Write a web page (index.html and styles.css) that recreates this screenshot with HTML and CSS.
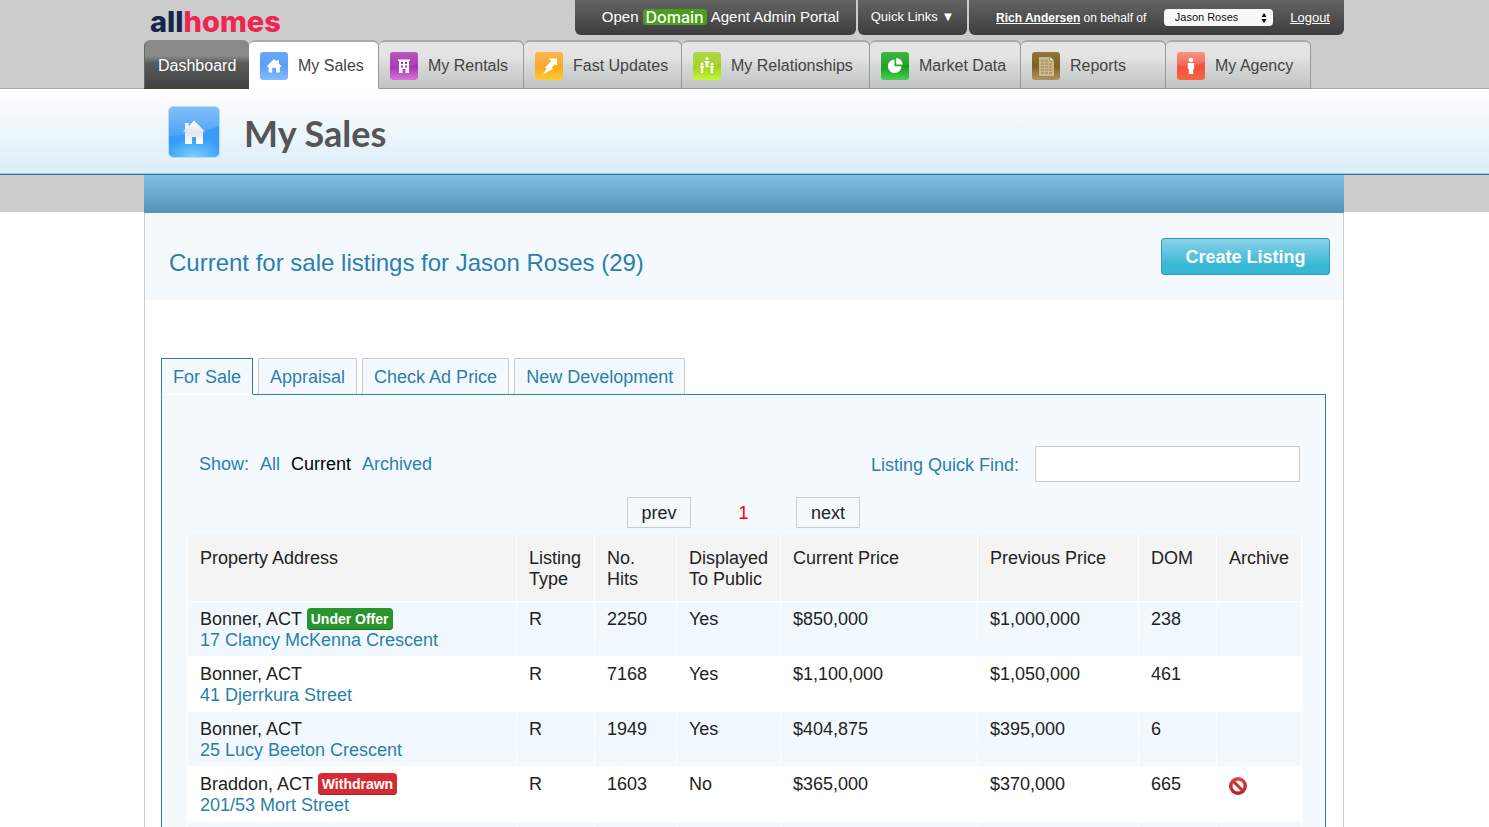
FILE: index.html
```html
<!DOCTYPE html>
<html lang="en">
<head>
<meta charset="utf-8">
<title>My Sales - allhomes</title>
<link rel="stylesheet" href="styles.css">
</head>
<body>
<svg class="defs" width="0" height="0" aria-hidden="true">
  <defs>
    <linearGradient id="blue" x1="0" y1="0" x2="0" y2="1"><stop offset="0" stop-color="#69a6f8"/><stop offset=".5" stop-color="#5a9ffb"/><stop offset="1" stop-color="#86bcff"/></linearGradient>
    <linearGradient id="purple" x1="0" y1="0" x2="0" y2="1"><stop offset="0" stop-color="#b04cb8"/><stop offset=".5" stop-color="#a32fae"/><stop offset="1" stop-color="#d676da"/></linearGradient>
    <linearGradient id="orange" x1="0" y1="0" x2="0" y2="1"><stop offset="0" stop-color="#fbb13a"/><stop offset=".5" stop-color="#f8a51c"/><stop offset="1" stop-color="#ffcb35"/></linearGradient>
    <linearGradient id="lime" x1="0" y1="0" x2="0" y2="1"><stop offset="0" stop-color="#aad433"/><stop offset=".5" stop-color="#9fd01c"/><stop offset="1" stop-color="#c6f73e"/></linearGradient>
    <linearGradient id="green" x1="0" y1="0" x2="0" y2="1"><stop offset="0" stop-color="#2bb02e"/><stop offset=".5" stop-color="#149c1b"/><stop offset="1" stop-color="#4bcf52"/></linearGradient>
    <linearGradient id="brown" x1="0" y1="0" x2="0" y2="1"><stop offset="0" stop-color="#94763a"/><stop offset=".5" stop-color="#80601f"/><stop offset="1" stop-color="#b3935a"/></linearGradient>
    <linearGradient id="red" x1="0" y1="0" x2="0" y2="1"><stop offset="0" stop-color="#fb8578"/><stop offset=".5" stop-color="#f0503a"/><stop offset="1" stop-color="#f4693f"/></linearGradient>
    <linearGradient id="sky" x1="0" y1="0" x2="0" y2="1"><stop offset="0" stop-color="#83bff9"/><stop offset=".55" stop-color="#4ea5f8"/><stop offset="1" stop-color="#5fbcff"/></linearGradient>
    <radialGradient id="glow" cx=".5" cy="1" r=".6"><stop offset="0" stop-color="#7dd0ff"/><stop offset="1" stop-color="#389df6"/></radialGradient>
    <linearGradient id="roof" x1="0" y1="0" x2="0" y2="1"><stop offset="0" stop-color="#fff"/><stop offset=".5" stop-color="#e2e6ea"/><stop offset="1" stop-color="#fff"/></linearGradient>
    <linearGradient id="stop" x1="0" y1="0" x2="0" y2="1"><stop offset="0" stop-color="#dc4a4a"/><stop offset="1" stop-color="#b01f24"/></linearGradient>
  </defs>
</svg>

<header class="top">
  <div class="wrap">
    <div class="top-row">
      <a class="logo" href="#"><span>all</span>homes</a>
      <div class="bars">
        <a class="bar bar-portal" href="#">Open <span class="domain">Domain</span> Agent Admin Portal</a>
        <button class="bar bar-quick" type="button">Quick Links ▼</button>
        <div class="bar bar-user">
          <span><a class="user" href="#">Rich Andersen</a> <label for="agent">on behalf of</label></span>
          <span class="pick">
            <select id="agent"><option>Jason Roses</option></select>
            <svg width="6" height="10" viewBox="0 0 6 10"><path d="M3 0 5.5 4H.5zM3 10 .5 6h5z"/></svg>
          </span>
          <a class="logout" href="#">Logout</a>
        </div>
      </div>
    </div>
    <nav class="nav">
      <a class="dash" href="#">Dashboard</a>
      <a class="on" href="#"><svg class="ico" viewBox="0 0 28 28"><rect width="28" height="28" rx="3" fill="url(#blue)"/><path d="M14 7l2.600 2.400V8.300h2.400v3.400l3 3h-2.200V20.500h-3.800v-4.700h-3.800v4.700H8.600v-5.800H6.300z" fill="#fff"/></svg>My Sales</a>
      <a href="#"><svg class="ico" viewBox="0 0 28 28"><rect width="28" height="28" rx="3" fill="url(#purple)"/><path d="M0 14Q14 18 28 12V0H0z" fill="#fff" opacity=".08"/><path d="M8 7.500h12V9h-1v12h-3.500v-4h-3v4H9V9H8z" fill="#fff"/><path d="M11 10h2v2h-2zm4 0h2v2h-2zm-4 3.500h2v2h-2zm4 0h2v2h-2z" fill="#a32fae"/></svg>My Rentals</a>
      <a href="#"><svg class="ico" viewBox="0 0 28 28"><rect width="28" height="28" rx="3" fill="url(#orange)"/><path d="M0 15Q14 17 28 12V0H0z" fill="#fff" opacity=".08"/><path d="M13.500 6.500H22V14l-2-2-3.500 4.200h2.300L8 22.500l3.800-6.500H9.700l6.600-7.200z" fill="#fff"/></svg>Fast Updates</a>
      <a href="#"><svg class="ico" viewBox="0 0 28 28"><rect width="28" height="28" rx="3" fill="url(#lime)"/><path d="M0 15Q14 17 28 12V0H0z" fill="#fff" opacity=".08"/><g fill="#fff"><circle cx="14" cy="6.500" r="1.600"/><circle cx="9" cy="12" r="1.500"/><circle cx="19" cy="12" r="1.500"/><path d="M11 9h6l-1.600 2v4.500h-2.800V11zM6.500 14h5l-1.200 2v5H8v-5zM16.500 14h5L20 16v5h-2.300v-5z"/></g></svg>My Relationships</a>
      <a href="#"><svg class="ico" viewBox="0 0 28 28"><rect width="28" height="28" rx="3" fill="url(#green)"/><path d="M0 15Q14 17 28 12V0H0z" fill="#fff" opacity=".08"/><path d="M13.500 7.500v6.800h7A6.800 6.800 0 1 1 13.500 7.500z" fill="#fff"/><path d="M15.200 6a6.500 6.500 0 0 1 6.500 6.500h-6.500z" fill="#fff"/></svg>Market Data</a>
      <a href="#"><svg class="ico" viewBox="0 0 28 28"><rect width="28" height="28" rx="3" fill="url(#brown)"/><path d="M7 5h11l4 4v15H7z" fill="#d8c9a8" opacity=".8"/><path d="M18 5v4h4" fill="#fff" stroke="#a58a55"/><path d="M9 9h7M9 12h11M9 15h11M9 18h11M9 21h11" stroke="#9c8047" stroke-dasharray="3 1"/></svg>Reports</a>
      <a href="#"><svg class="ico" viewBox="0 0 28 28"><rect width="28" height="28" rx="3" fill="url(#red)"/><path d="M0 14Q14 16 28 10V3a3 3 0 0 0-3-3H3a3 3 0 0 0-3 3z" fill="#fff" opacity=".12"/><circle cx="14" cy="8" r="2.300" fill="#fff"/><path d="M10.800 11h6.400v6h-1v5h-4.400v-5h-1z" fill="#fff"/></svg>My Agency</a>
    </nav>
  </div>
</header>

<div class="title-band">
  <div class="wrap title">
    <svg class="title-ico" viewBox="0 0 52 52"><rect x=".5" y=".5" width="51" height="51" rx="5" fill="url(#sky)" stroke="#b5dcfb"/><path d="M1 30Q28 29 51 20v26a5 5 0 0 1-5 5H6a5 5 0 0 1-5-5z" fill="url(#glow)"/><path d="M26 14.500 37 25.500h-2V38h-7v-7h-4v7h-7V25.500h-2l2-2V17h3.500v3.500z" fill="url(#roof)"/></svg>
    <h1>My Sales</h1>
  </div>
</div>

<div class="strip"><div class="wrap"><div class="strip-fill"></div></div></div>

<main class="wrap">
  <div class="page">
    <div class="heading">
      <h2>Current for sale listings for Jason Roses (29)</h2>
      <button class="create" type="button">Create Listing</button>
    </div>
    <div class="tabs">
      <a class="on" href="#">For Sale</a>
      <a href="#">Appraisal</a>
      <a href="#">Check Ad Price</a>
      <a href="#">New Development</a>
    </div>
    <section class="panel">
      <div class="filters">
        <div class="show"><span>Show:</span><a href="#">All</a><a class="on" href="#">Current</a><a href="#">Archived</a></div>
        <div class="find"><label for="find">Listing Quick Find:</label><input id="find" type="text"></div>
      </div>
      <div class="pager"><button type="button">prev</button><span>1</span><button type="button">next</button></div>
      <table>
        <colgroup><col class="c-addr"><col class="c-type"><col class="c-hits"><col class="c-disp"><col class="c-cur"><col class="c-prev"><col class="c-dom"><col class="c-arch"></colgroup>
        <thead><tr><th>Property Address</th><th>Listing Type</th><th>No.<br>Hits</th><th>Displayed To Public</th><th>Current Price</th><th>Previous Price</th><th>DOM</th><th>Archive</th></tr></thead>
        <tbody>
          <tr><td>Bonner, ACT <span class="tag offer">Under Offer</span><br><a href="#">17 Clancy McKenna Crescent</a></td><td>R</td><td>2250</td><td>Yes</td><td>$850,000</td><td>$1,000,000</td><td>238</td><td></td></tr>
          <tr><td>Bonner, ACT<br><a href="#">41 Djerrkura Street</a></td><td>R</td><td>7168</td><td>Yes</td><td>$1,100,000</td><td>$1,050,000</td><td>461</td><td></td></tr>
          <tr><td>Bonner, ACT<br><a href="#">25 Lucy Beeton Crescent</a></td><td>R</td><td>1949</td><td>Yes</td><td>$404,875</td><td>$395,000</td><td>6</td><td></td></tr>
          <tr><td>Braddon, ACT <span class="tag gone">Withdrawn</span><br><a href="#">201/53 Mort Street</a></td><td>R</td><td>1603</td><td>No</td><td>$365,000</td><td>$370,000</td><td>665</td><td><button class="archive" type="button" aria-label="Archive"><svg width="18" height="18" viewBox="0 0 18 18"><circle cx="9" cy="9" r="9" fill="url(#stop)"/><circle cx="9" cy="9" r="5.500" fill="#f4f2f2"/><path d="M4.800 4.800l8.400 8.400" stroke="#c23034" stroke-width="3"/></svg></button></td></tr>
          <tr><td></td><td></td><td></td><td></td><td></td><td></td><td></td><td></td></tr>
        </tbody>
      </table>
    </section>
  </div>
</main>
</body>
</html>
```
FILE: styles.css
```css
* { box-sizing: border-box; }
body { margin: 0; height: 100vh; overflow: hidden; background: #fff; color: #222; font: 18px/21px "Liberation Sans", Arial, sans-serif; }
a { color: #2a7fae; text-decoration: none; }
button, input, select { font: inherit; color: inherit; margin: 0; }
h1, h2 { margin: 0; font-weight: normal; }
.defs { display: block; }
.wrap { box-sizing: content-box; max-width: 1200px; margin: 0 auto; padding-right: 1px; }

.top { background: #ccc; box-shadow: inset 0 -1px #aaa; }
.top-row { display: flex; justify-content: space-between; height: 40px; }
.logo { padding: 3px 0 0 6px; font: 800 29px/38px Inter, sans-serif; color: #ee2550; }
.logo span { color: #14264d; }
.bars { display: flex; gap: 2px; height: 35px; }
.bar { display: flex; align-items: center; justify-content: center; border: 0; border-radius: 0 0 6px 6px; background: linear-gradient(#646464, #3c3c3c); color: #fff; font-size: 13px; line-height: 20px; padding: 0 0 1px; white-space: nowrap; }
.bar a { color: #fff; text-decoration: underline; }
.bar-portal { width: 281px; padding-left: 10px; font-size: 15px; gap: 4px; }
.bar-quick { width: 109px; }
.bar-user { width: 375px; padding: 0 14px 0 27px; font-size: 12px; justify-content: space-between; }
.domain { padding: 0 3px; border-radius: 3px; background: #4a9e1c; font: 500 16px/16px Inter, sans-serif; }
.bar .user { font-weight: bold; }
.pick { display: grid; align-items: center; }
.pick > * { grid-area: 1 / 1; }
.pick svg { justify-self: end; margin-right: 6px; pointer-events: none; }
.pick select { appearance: none; width: 109px; height: 17px; padding: 0 11px; border: 0; border-radius: 4px; background: #f8f8f8; color: #111; font-size: 11px; line-height: 17px; }
.logout { font-size: 13px; }

.nav { display: grid; grid-template-columns: 105px 130px 145px 158px 188px 151px 145px 145px; }
.nav a { display: flex; align-items: center; gap: 10px; height: 49px; padding: 2px 0 0 11px; border: 1px solid #999; border-width: 2px 1px 1px 0; border-top-color: #aaa; border-radius: 6px 6px 0 0; background: linear-gradient(#e4e4e4 30%, #d5d6d6 55%, #c2c4c4); color: #444; font-size: 16px; line-height: 20px; white-space: nowrap; }
.nav .dash { padding-left: 13px; border-width: 2px 0 1px 1px; border-color: #8a8a8a #666 #44442a; background: linear-gradient(#8a8a8a 30%, #5b5d5d 45%, #404242); color: #fff; }
.nav .on { background: #fff; border-bottom-color: #fff; }
.ico { width: 28px; height: 28px; flex: none; }

.title-band { background: linear-gradient(#fff, #e9f4fb 60%, #dcedf6); border-bottom: 1px solid #2374a5; box-shadow: inset 0 -1px #9cc8da; }
.title { display: flex; align-items: center; gap: 24px; height: 85px; }
.title-ico { width: 52px; height: 52px; margin-left: 24px; }
.title h1 { padding-top: 2px; font: bold 36px/44px Lato, sans-serif; color: #555; }

.strip { background: linear-gradient(#ccc 37px, #fff 37px); }
.strip-fill { height: 38px; background: linear-gradient(#80bee2, #5594b8); }

.page { border: 1px solid #ccc; border-width: 0 1px; padding-bottom: 40px; }
.heading { display: flex; align-items: center; justify-content: space-between; height: 87px; padding: 0 13px 0 24px; margin-bottom: 58px; background: #f4f9fe; }
.heading h2 { padding-top: 12px; font-size: 24px; line-height: 28px; color: #2a7fae; }
.create { width: 169px; height: 37px; padding: 2px 0 0; border: 1px solid #3f94c8; border-radius: 3px; background: linear-gradient(#8ad1e8, #39b8d6 75%); color: #fff; font-weight: bold; }
.tabs { display: flex; gap: 5px; margin-left: 16px; }
.tabs a { height: 36px; padding: 8px 11px 0; border: 1px solid #ccc; border-bottom: 0; background: #f4f9fe; }
.tabs .on { height: 37px; margin-bottom: -1px; border-color: #2a7fae; border-bottom: 1px solid #fff; z-index: 1; }
.panel { margin: 0 17px 0 16px; border: 1px solid #2a7fae; background: #f4f9fe; padding: 51px 23px 24px 25px; }
.filters { display: flex; align-items: center; justify-content: space-between; padding: 0 2px 0 12px; color: #2a7fae; }
.show { display: flex; gap: 11px; }
.show .on { color: #000; }
.find { display: flex; align-items: center; gap: 16px; }
.find label { padding-top: 2px; }
.find input { width: 265px; height: 36px; padding: 0 8px; border: 1px solid #ccc; background: #fff; }
.pager { display: flex; justify-content: center; align-items: center; margin: 15px 0 7px; padding-right: 2px; }
.pager button { width: 64px; height: 31px; padding: 2px 0 0; border: 1px solid #ccc; background: #f4f9fe; }
.pager span { width: 105px; padding-top: 2px; text-align: center; color: #f00; }

table { width: 100%; table-layout: fixed; border-collapse: separate; border-spacing: 0; border-left: 1px solid #fff; }
.c-addr { width: 329px; }
.c-type, .c-dom { width: 78px; }
.c-hits { width: 82px; }
.c-disp { width: 104px; }
.c-cur { width: 197px; }
.c-prev { width: 161px; }
.c-arch { width: 85px; }
th, td { border: 0 solid #fff; border-width: 0 1px 1px 0; vertical-align: top; text-align: left; font-weight: normal; }
th { height: 67px; padding: 13px 0 11px 12px; background: #f4f4f4; }
td { height: 55px; padding: 7px 0 5px 12px; }
tbody tr:nth-child(odd) { background: #f2f9fe; }
tbody tr:nth-child(even) { background: #fff; }
.tag { display: inline-block; height: 22px; margin: -1px 0; padding: 1px 4px 0; border-radius: 4px; color: #fff; font-size: 14px; font-weight: bold; line-height: 21px; vertical-align: top; }
.offer { background: #2b952d; box-shadow: inset 0 -1px #1e7621; }
.gone { background: #d32c32; box-shadow: inset 0 -1px #a92127; }
.archive { display: block; margin-top: 3px; padding: 0; border: 0; background: none; }
.archive svg { display: block; }
```
